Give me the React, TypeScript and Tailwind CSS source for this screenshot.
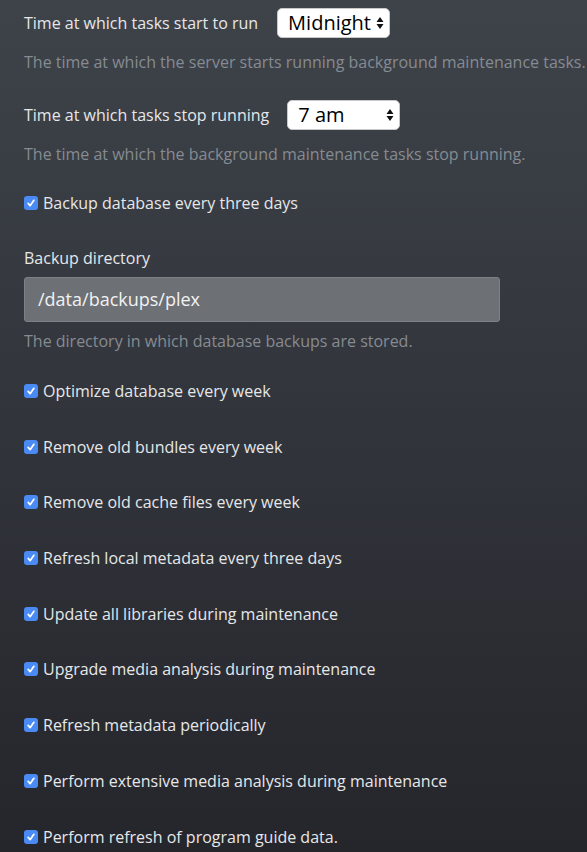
const checks = [
  'Optimize database every week',
  'Remove old bundles every week',
  'Remove old cache files every week',
  'Refresh local metadata every three days',
  'Update all libraries during maintenance',
  'Upgrade media analysis during maintenance',
  'Refresh metadata periodically',
  'Perform extensive media analysis during maintenance',
  'Perform refresh of program guide data.',
];

function Check({ label }: { label: string }) {
  return (
    <label className="flex h-[24px] items-center gap-[5px] text-[16px] text-[#e6e7e9]">
      <span className="flex h-[14px] w-[14px] items-center justify-center rounded-[3px] bg-[#4a8af5]">
        <svg width="10" height="10" viewBox="0 0 10 10" fill="none">
          <path d="M2.2 5.4 4.1 7.7 7.9 2.3" stroke="white" strokeWidth="1.7" strokeLinecap="round" strokeLinejoin="round" />
        </svg>
      </span>
      {label}
    </label>
  );
}

function Select({ value }: { value: string }) {
  return (
    <div className="flex h-[30px] w-[113px] items-center justify-between rounded-[5px] border border-[#c9c9c9] bg-white pl-[10px] pr-[5px] text-[20px] text-black">
      <span>{value}</span>
      <svg width="8" height="14" viewBox="0 0 8 14">
        <path d="M4 1 7.5 6H.5z M4 13 .5 8h7z" fill="#111" />
      </svg>
    </div>
  );
}

export default function App() {
  return (
    <div
      className="h-[852px] w-[587px] overflow-hidden bg-gradient-to-b from-[#3e434a] to-[#25262c] pl-[24px] pt-[8px]"
      style={{ fontFamily: '"Open Sans", sans-serif' }}
    >
      <div className="flex items-center gap-[19px] text-[16px] text-[#e6e7e9]">
        <span>Time at which tasks start to run</span>
        <Select value="Midnight" />
      </div>
      <p className="mt-[12px] whitespace-nowrap text-[16px] text-[#868b92]">
        The time at which the server starts running background maintenance tasks.
      </p>
      <div className="mt-[26px] flex items-center gap-[18px] text-[16px] text-[#e6e7e9]">
        <span>Time at which tasks stop running</span>
        <Select value="7 am" />
      </div>
      <p className="mt-[12px] text-[16px] text-[#868b92]">
        The time at which the background maintenance tasks stop running.
      </p>
      <div className="mt-[25px]">
        <Check label="Backup database every three days" />
      </div>
      <p className="mt-[31px] text-[16px] text-[#e6e7e9]">Backup directory</p>
      <div className="mt-[7px] flex h-[45px] w-[476px] items-center rounded-[3px] border border-[#7d8085] bg-[#6d7075] px-[13px] text-[18px] text-[#f2f2f2]">
        /data/backups/plex
      </div>
      <p className="mt-[7px] text-[16px] text-[#868b92]">The directory in which database backups are stored.</p>
      <div className="mt-[26px] flex flex-col gap-[31.7px]">
        {checks.map((c) => (
          <Check key={c} label={c} />
        ))}
      </div>
    </div>
  );
}
